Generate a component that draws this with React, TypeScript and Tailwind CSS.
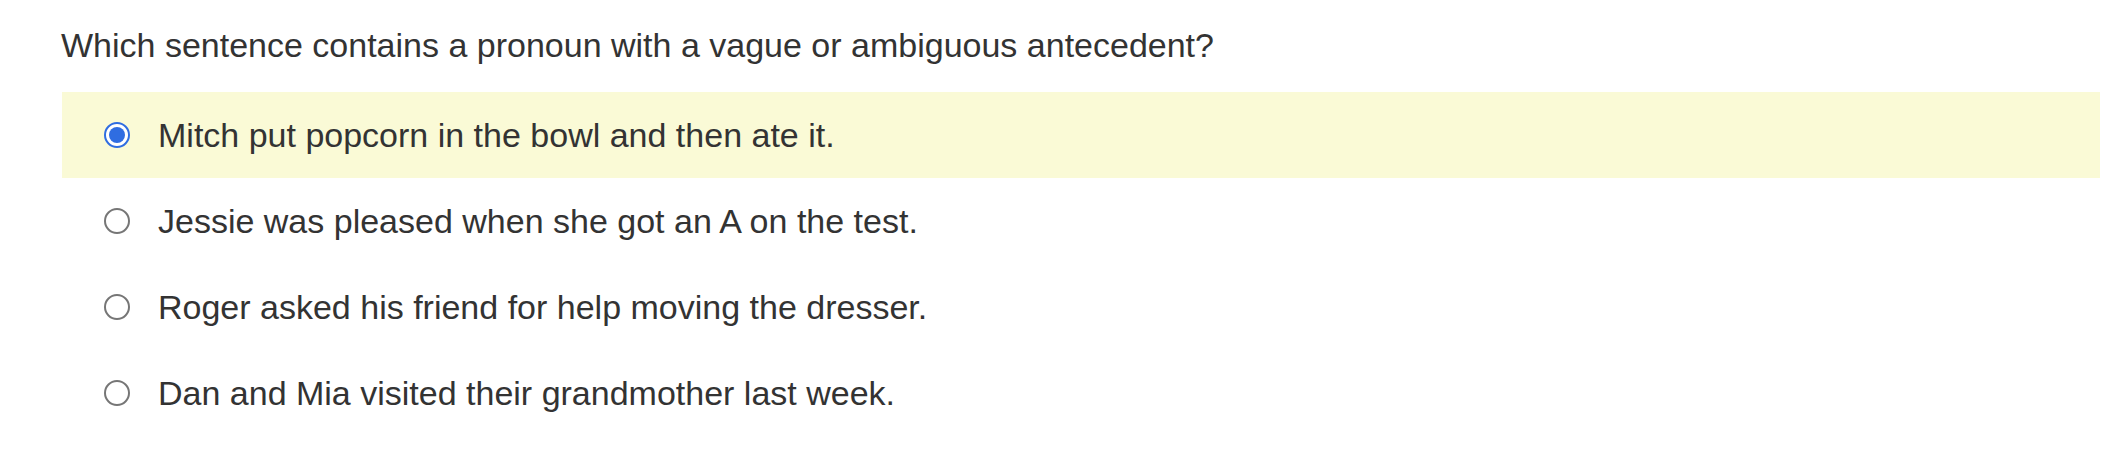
const choices = [
  { text: "Mitch put popcorn in the bowl and then ate it.", selected: true },
  { text: "Jessie was pleased when she got an A on the test.", selected: false },
  { text: "Roger asked his friend for help moving the dresser.", selected: false },
  { text: "Dan and Mia visited their grandmother last week.", selected: false },
];

function Radio({ checked }: { checked: boolean }) {
  if (checked) {
    return (
      <span className="flex h-[26px] w-[26px] shrink-0 items-center justify-center rounded-full border-2 border-[#2f6de1] bg-white">
        <span className="h-[16px] w-[16px] rounded-full bg-[#2f6de1]" />
      </span>
    );
  }
  return <span className="h-[26px] w-[26px] shrink-0 rounded-full border-2 border-[#767676] bg-white" />;
}

function Choice({ text, selected }: { text: string; selected: boolean }) {
  return (
    <div className={`flex h-[86px] items-center gap-[28px] pl-[42px] ${selected ? "bg-[#fafad6]" : "bg-white"}`}>
      <Radio checked={selected} />
      <span>{text}</span>
    </div>
  );
}

export default function App() {
  return (
    <div className="h-[460px] bg-white pl-[62px] pr-[14px] pt-[25px] text-[34px] text-[#333333] font-['Liberation_Sans',Arial,sans-serif]">
      <p className="-ml-px leading-[40px]">Which sentence contains a pronoun with a vague or ambiguous antecedent?</p>
      <div className="mt-[27px] flex flex-col">
        {choices.map((c) => (
          <Choice key={c.text} text={c.text} selected={c.selected} />
        ))}
      </div>
    </div>
  );
}
